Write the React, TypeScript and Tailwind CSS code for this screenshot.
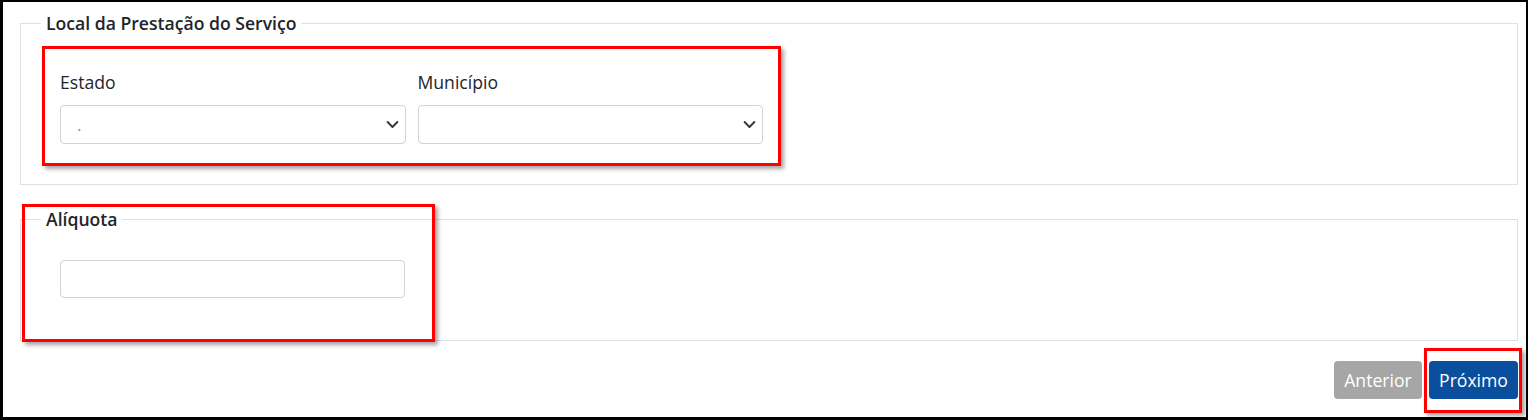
import React from "react";

const Chevron = () => (
  <svg width="13" height="13" viewBox="0 0 16 16" className="shrink-0">
    <path d="M2 5l6 6 6-6" fill="none" stroke="#343a40" strokeWidth="2.4" strokeLinecap="round" strokeLinejoin="round" />
  </svg>
);

const SelectBox = ({ text }: { text: string }) => (
  <div className="flex h-[39px] w-full items-center justify-between rounded-[4px] border border-[#ced4da] bg-white pl-[16px] pr-[6px]">
    <span className="text-[17.6px] text-[#9aa0a6]">{text}</span>
    <Chevron />
  </div>
);

export default function App() {
  return (
    <div
      className="relative h-[420px] w-[1528px] border-b-[3px] border-l-[3px] border-r-[2px] border-t-[2px] border-black bg-white pr-[8px] pl-[17px] pt-[8px]"
      style={{ fontFamily: '"Open Sans", "Liberation Sans", sans-serif' }}
    >
      <fieldset className="m-0 border border-[#dee2e6] p-0 pb-[18px]">
        <legend className="ml-[20px] px-[5px] text-[17.6px] font-semibold leading-[26px] text-[#212529]">
          Local da Prestação do Serviço
        </legend>
        <div className="ml-[21px] mt-[10px] w-[739px] border-[3px] border-[#ff0000] px-[15px] pb-[19px] pt-[20px] shadow-[3px_3px_4px_rgba(0,0,0,0.35)]">
          <div className="flex gap-[12px]">
            <div className="flex flex-1 flex-col">
              <label className="mb-[10px] text-[17.6px] leading-[26px] text-[#212529]">Estado</label>
              <SelectBox text="." />
            </div>
            <div className="flex flex-1 flex-col">
              <label className="mb-[10px] text-[17.6px] leading-[26px] text-[#212529]">Município</label>
              <SelectBox text="" />
            </div>
          </div>
        </div>
      </fieldset>

      <div className="relative mt-[21px]">
        <fieldset className="m-0 border border-[#dee2e6] p-0 pb-[42px]">
          <legend className="ml-[20px] px-[5px] text-[17.6px] font-semibold leading-[26px] text-[#212529]">
            Alíquota
          </legend>
          <div className="ml-[39px] mt-[28px] h-[38px] w-[345px] rounded-[4px] border border-[#ced4da] bg-white" />
        </fieldset>
        <div className="pointer-events-none absolute left-[2px] top-[-2px] h-[138px] w-[413px] border-[3px] border-[#ff0000] shadow-[3px_3px_4px_rgba(0,0,0,0.35)]" />
      </div>

      <div className="relative mt-[20px] flex justify-end gap-[7px]">
        <button className="h-[38px] w-[88px] rounded-[4px] bg-[#a6a6a6] text-[17.6px] text-white">Anterior</button>
        <button className="h-[38px] w-[89px] rounded-[4px] bg-[#0a4e9e] text-[17.6px] text-white">Próximo</button>
        <div className="pointer-events-none absolute right-[-4px] top-[-13px] h-[65px] w-[98px] border-[3px] border-[#ff0000] shadow-[3px_3px_4px_rgba(0,0,0,0.35)]" />
      </div>
    </div>
  );
}
